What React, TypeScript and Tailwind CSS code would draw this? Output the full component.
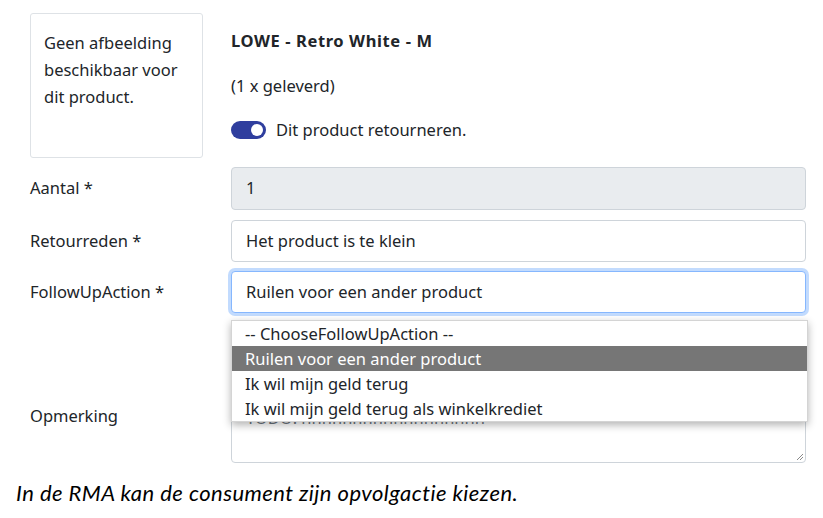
export default function App() {
  const options = [
    "-- ChooseFollowUpAction --",
    "Ruilen voor een ander product",
    "Ik wil mijn geld terug",
    "Ik wil mijn geld terug als winkelkrediet",
  ];

  return (
    <div className="w-[823px] h-[518px] bg-white text-[#212529] font-['Noto_Sans',sans-serif] text-[16.5px] overflow-hidden">
      <div className="pl-[30px] pr-[17px] pt-[13px]">
        {/* product header */}
        <div className="flex">
          <div className="w-[173px] h-[145px] border border-[#dee2e6] rounded-[3px] pl-[13px] pr-[8px] pt-[15px] leading-[27px]">
            Geen afbeelding beschikbaar voor dit product.
          </div>
          <div className="ml-[28px] pt-[16px]">
            <div className="font-bold leading-[24px] tracking-[0.6px]">LOWE - Retro White - M</div>
            <div className="mt-[21px] leading-[24px]">(1 x geleverd)</div>
            <div className="mt-[20px] flex items-center">
              <div className="w-[35px] h-[18px] rounded-full bg-[#2f3e9e] flex items-center justify-end pr-[3px]">
                <div className="w-[12px] h-[12px] rounded-full bg-white" />
              </div>
              <span className="ml-[10px]">Dit product retourneren.</span>
            </div>
          </div>
        </div>

        {/* form rows */}
        <div className="mt-[9px] grid grid-cols-[201px_1fr] items-center">
          <label>Aantal *</label>
          <div className="h-[43px] border border-[#ced4da] rounded-[4px] bg-[#e9ecef] px-[14px] flex items-center">
            1
          </div>
        </div>

        <div className="mt-[10px] grid grid-cols-[201px_1fr] items-center">
          <label>Retourreden *</label>
          <div className="h-[42px] border border-[#ced4da] rounded-[4px] bg-white px-[14px] flex items-center">
            Het product is te klein
          </div>
        </div>

        <div className="mt-[9px] grid grid-cols-[201px_1fr] items-center">
          <label>FollowUpAction *</label>
          <div className="relative">
            <div className="h-[42px] border border-[#86b7fe] rounded-[4px] bg-white px-[14px] flex items-center shadow-[0_0_0_3px_rgba(13,110,253,0.25)]">
              Ruilen voor een ander product
            </div>
            <div className="absolute z-10 left-0 top-[49px] w-[577px] bg-white border border-[#d4d4d4] shadow-[0_3px_8px_rgba(0,0,0,0.3)] text-[16.5px]">
              {options.map((o, i) => (
                <div
                  key={o}
                  className={
                    i === 1
                      ? "h-[25px] leading-[25px] px-[13px] bg-[#767676] text-white"
                      : "h-[25px] leading-[25px] px-[13px] text-[#212529]"
                  }
                >
                  {o}
                </div>
              ))}
            </div>
          </div>
        </div>

        <div className="mt-[82px] grid grid-cols-[201px_1fr] items-start">
          <label className="pt-[9px]">Opmerking</label>
          <div className="relative h-[68px] border border-[#ced4da] rounded-[4px] bg-white px-[14px] pt-[10px] text-[#6c757d]">
            TODO: hhhhhhhhhhhhhhhhhh
            <svg className="absolute right-[1px] bottom-[1px]" width="9" height="9" viewBox="0 0 9 9">
              <path d="M8 2 L2 8 M8 5 L5 8" stroke="#8a8a8a" strokeWidth="1" />
            </svg>
          </div>
        </div>
      </div>

      <div className="pl-[16px] mt-[17px] italic text-[22px] tracking-[0.45px] font-['Lato',sans-serif] text-black leading-[26px]">
        In de RMA kan de consument zijn opvolgactie kiezen.
      </div>
    </div>
  );
}
